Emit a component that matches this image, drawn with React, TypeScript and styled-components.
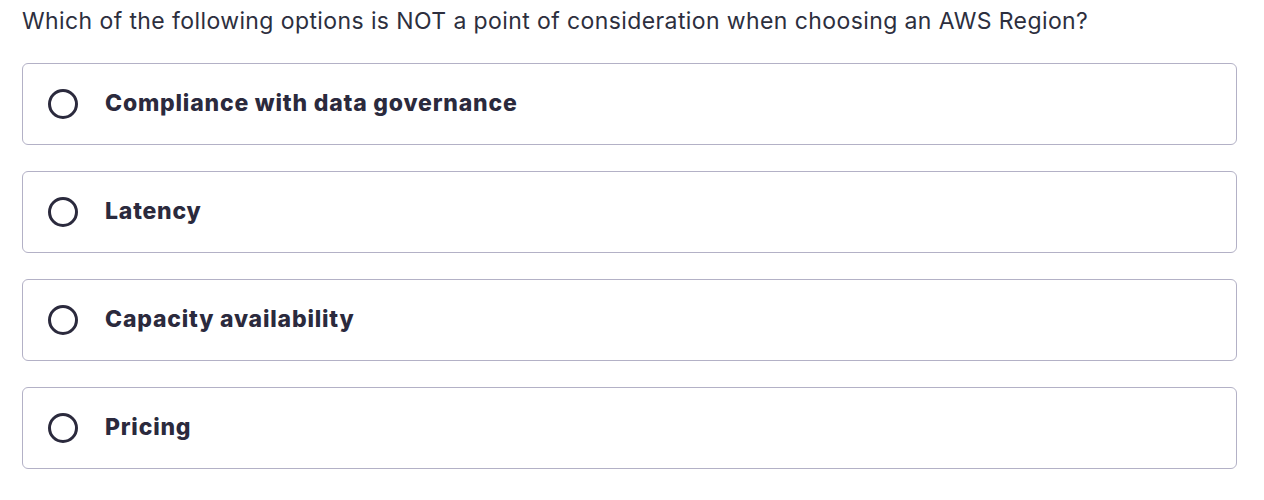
import styled, { createGlobalStyle } from 'styled-components'

const GlobalStyle = createGlobalStyle`
    body {
        margin: 0;
        background: #ffffff;
        font-family: Inter, "Noto Sans", Arial, sans-serif;
        color: #2b2a3d;
    }
`

const Page = styled.div`
    padding: 6px 27px 0 22px;
`

const Pergunta = styled.p`
    margin: 0 0 27px 0;
    font-size: 23px;
    line-height: 30px;
    font-weight: 400;
    letter-spacing: 0.4px;
    color: #2d2f3e;
`

const Lista = styled.div`
    display: flex;
    flex-direction: column;
    gap: 26px;
`

const Opcao = styled.label`
    display: flex;
    align-items: center;
    gap: 27px;
    height: 82px;
    box-sizing: border-box;
    padding: 0 25px;
    border: 1px solid #b3b1c6;
    border-radius: 6px;
    cursor: pointer;
`

const Radio = styled.span`
    width: 30px;
    height: 30px;
    box-sizing: border-box;
    border: 3px solid #2b2a3d;
    border-radius: 50%;
    flex-shrink: 0;
`

const Texto = styled.span`
    font-size: 23px;
    font-weight: 800;
    letter-spacing: 0.8px;
    padding-bottom: 2px;
    color: #2b2a3d;
`

const opcoes = [
    'Compliance with data governance',
    'Latency',
    'Capacity availability',
    'Pricing'
]

function App() {
    return (
        <>
            <GlobalStyle />
            <Page>
                <Pergunta>
                    Which of the following options is NOT a point of consideration when choosing an AWS Region?
                </Pergunta>
                <Lista>
                    {opcoes.map((opcao) => (
                        <Opcao key={opcao}>
                            <Radio />
                            <Texto>{opcao}</Texto>
                        </Opcao>
                    ))}
                </Lista>
            </Page>
        </>
    )
}

export default App
